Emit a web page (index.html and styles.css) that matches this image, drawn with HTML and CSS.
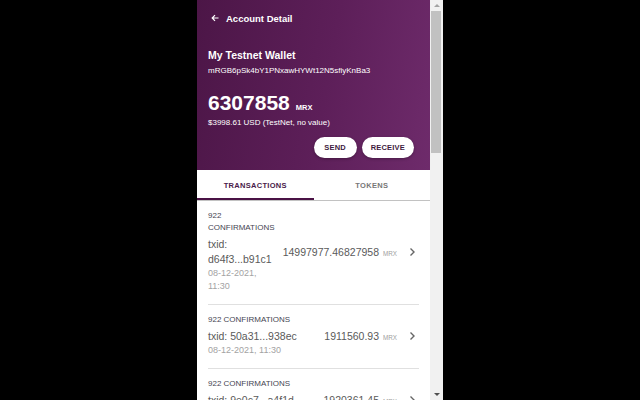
FILE: index.html
```html
<!DOCTYPE html>
<html lang="en">
<head>
    <meta charset="UTF-8">
    <meta name="viewport" content="width=device-width, initial-scale=1.0">
    <title>Account Detail</title>
    <link rel="stylesheet" href="styles.css">
</head>
<body>
    <div class="popup">
        <div class="view">
            <!-- Wallet header -->
            <header class="hero">
                <div class="topbar">
                    <svg class="back" width="8" height="8" viewBox="0 0 8 8">
                        <path d="M7.5 4H1.2M4 1.2L1.2 4L4 6.8" fill="none" stroke="#fff" stroke-width="1.2"/>
                    </svg>
                    <span>Account Detail</span>
                </div>
                <div class="wallet-name">My Testnet Wallet</div>
                <div class="address">mRGB6pSk4bY1PNxawHYWt12N5sfiyKnBa3</div>
                <div class="balance">
                    <span class="balance-value">6307858</span>
                    <span class="balance-unit">MRX</span>
                </div>
                <div class="fiat">$3998.61 USD (TestNet, no value)</div>
                <div class="actions">
                    <button type="button" class="pill">SEND</button>
                    <button type="button" class="pill">RECEIVE</button>
                </div>
            </header>

            <!-- Tabs -->
            <nav class="tabs">
                <div class="tab active">TRANSACTIONS</div>
                <div class="tab">TOKENS</div>
            </nav>

            <!-- Transaction list -->
            <ul class="tx-list">
                <li class="tx">
                    <div class="tx-info">
                        <div class="tx-conf">922 CONFIRMATIONS</div>
                        <div class="tx-id">txid: d64f3...b91c1</div>
                        <div class="tx-date">08-12-2021, 11:30</div>
                    </div>
                    <div class="tx-amount">14997977.46827958<span class="tx-unit">MRX</span></div>
                    <svg class="chevron" width="10" height="10" viewBox="0 0 10 10">
                        <path d="M1.5 1.5L5 5L1.5 8.5" fill="none" stroke="#666" stroke-width="1.4"/>
                    </svg>
                </li>
                <li class="tx">
                    <div class="tx-info">
                        <div class="tx-conf">922 CONFIRMATIONS</div>
                        <div class="tx-id">txid: 50a31...938ec</div>
                        <div class="tx-date">08-12-2021, 11:30</div>
                    </div>
                    <div class="tx-amount">1911560.93<span class="tx-unit">MRX</span></div>
                    <svg class="chevron" width="10" height="10" viewBox="0 0 10 10">
                        <path d="M1.5 1.5L5 5L1.5 8.5" fill="none" stroke="#666" stroke-width="1.4"/>
                    </svg>
                </li>
                <li class="tx">
                    <div class="tx-info">
                        <div class="tx-conf">922 CONFIRMATIONS</div>
                        <div class="tx-id">txid: 9e0c7...a4f1d</div>
                        <div class="tx-date">08-12-2021, 11:29</div>
                    </div>
                    <div class="tx-amount">1920361.45<span class="tx-unit">MRX</span></div>
                    <svg class="chevron" width="10" height="10" viewBox="0 0 10 10">
                        <path d="M1.5 1.5L5 5L1.5 8.5" fill="none" stroke="#666" stroke-width="1.4"/>
                    </svg>
                </li>
            </ul>
        </div>

        <!-- Scrollbar -->
        <div class="scrollbar">
            <div class="sb-btn"><span class="sb-up"></span></div>
            <div class="sb-thumb"></div>
            <div class="sb-track"></div>
            <div class="sb-btn"><span class="sb-down"></span></div>
        </div>
    </div>
</body>
</html>
```

FILE: styles.css
```css
/* General Styles */
body {
    margin: 0;
    background-color: #000;
    font-family: "Liberation Sans", Arial, sans-serif;
    display: flex;
    justify-content: center;
    height: 400px;
    overflow: hidden;
}

.popup {
    width: 246px;
    height: 400px;
    display: flex;
    background-color: #fff;
}

.view {
    width: 233px;
    height: 400px;
    overflow: hidden;
}

/* Header */
.hero {
    background: linear-gradient(100deg, #4c1647 0%, #5d1f59 55%, #6e2b6b 100%);
    color: #fff;
    padding: 0 16px 12px 11px;
}

.topbar {
    height: 36px;
    display: flex;
    align-items: center;
    font-size: 9.5px;
    font-weight: bold;
}

.back {
    margin-left: 3px;
    margin-right: 7px;
}

.wallet-name {
    margin-top: 12px;
    font-size: 10.5px;
    line-height: 14px;
    font-weight: bold;
}

.address {
    margin-top: 3px;
    font-size: 8px;
    line-height: 12px;
}

.balance {
    margin-top: 14px;
    height: 24px;
    display: flex;
    align-items: baseline;
    line-height: 24px;
}

.balance-value {
    font-size: 21px;
    font-weight: bold;
}

.balance-unit {
    font-size: 7.5px;
    font-weight: bold;
    margin-left: 6px;
}

.fiat {
    margin-top: 2px;
    font-size: 8px;
    line-height: 12px;
}

.actions {
    margin-top: 8px;
    display: flex;
    justify-content: flex-end;
    gap: 5px;
}

.pill {
    height: 21px;
    min-width: 43px;
    padding: 0 9px;
    border: none;
    border-radius: 11px;
    background-color: #fff;
    color: #3d1a40;
    font-family: inherit;
    font-size: 7.5px;
    font-weight: bold;
    letter-spacing: 0.2px;
    box-shadow: 0 1px 3px rgba(0, 0, 0, 0.3);
    cursor: pointer;
}

/* Tabs */
.tabs {
    display: flex;
    border-bottom: 1px solid #c2c2c2;
}

.tab {
    flex: 1;
    height: 30px;
    display: flex;
    align-items: center;
    justify-content: center;
    font-size: 7.5px;
    font-weight: bold;
    letter-spacing: 0.3px;
    color: #777;
}

.tab.active {
    color: #4a1a4a;
    box-shadow: inset 0 -2px 0 #4a1245;
}

/* Transactions */
.tx-list {
    list-style: none;
    margin: 0;
    padding: 0 11px;
}

.tx {
    display: flex;
    align-items: center;
    padding: 9px 0 11px;
    border-bottom: 1px solid #e0e0e0;
}

.tx-info {
    flex: 1;
    min-width: 0;
    margin-right: 8px;
}

.tx-conf {
    font-size: 8px;
    line-height: 12px;
    color: #454552;
}

.tx-id {
    margin-top: 3px;
    font-size: 10.5px;
    line-height: 15px;
    color: #5a5a5a;
}

.tx-date {
    font-size: 9px;
    line-height: 13px;
    color: #a3a3a3;
}

.tx-amount {
    white-space: nowrap;
    font-size: 10.5px;
    color: #5a5a5a;
}

.tx-unit {
    font-size: 6.3px;
    color: #a0a0a0;
    margin-left: 4px;
}

.chevron {
    margin-left: 12px;
    flex: none;
}

/* Scrollbar */
.scrollbar {
    width: 13px;
    height: 400px;
    display: flex;
    flex-direction: column;
    background-color: #f1f1f1;
}

.sb-btn {
    height: 11px;
    display: flex;
    align-items: center;
    justify-content: center;
}

.sb-up {
    border-left: 3px solid transparent;
    border-right: 3px solid transparent;
    border-bottom: 3px solid #a3a3a3;
}

.sb-down {
    border-left: 3px solid transparent;
    border-right: 3px solid transparent;
    border-top: 3px solid #505050;
}

.sb-thumb {
    height: 142px;
    margin: 0 2px 0 1px;
    background-color: #c1c1c1;
}

.sb-track {
    flex: 1;
}
```
